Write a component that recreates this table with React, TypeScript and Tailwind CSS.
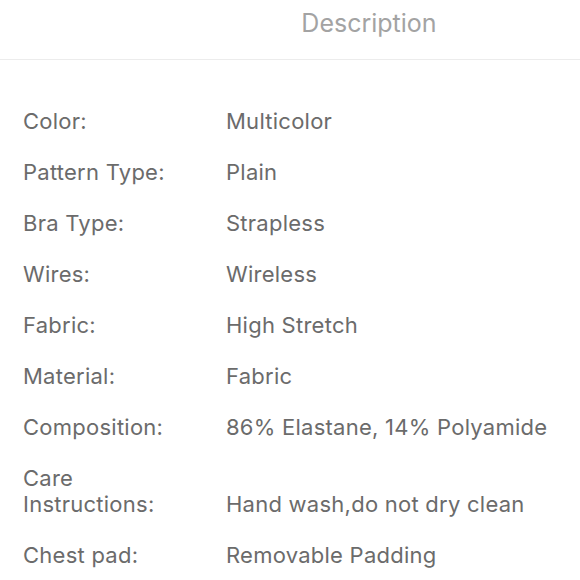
const rows: [string, string][] = [
  ['Color:', 'Multicolor'],
  ['Pattern Type:', 'Plain'],
  ['Bra Type:', 'Strapless'],
  ['Wires:', 'Wireless'],
  ['Fabric:', 'High Stretch'],
  ['Material:', 'Fabric'],
  ['Composition:', '86% Elastane, 14% Polyamide'],
  ['Care Instructions:', 'Hand wash,do not dry clean'],
  ['Chest pad:', 'Removable Padding'],
]

export default function App() {
  return (
    <div className="w-[580px] h-[580px] overflow-hidden bg-white font-['Inter',sans-serif]">
      <div className="h-[60px] border-b border-[#ececec] flex items-start justify-center pl-[158px]">
        <h1 className="mt-[7px] text-[25px] leading-[32px] text-[#a3a3a3]">Description</h1>
      </div>
      <div className="pt-[48px] px-[23px] flex flex-col gap-[25px]">
        {rows.map(([label, value]) => (
          <div key={label} className="flex items-end text-[22px] leading-[26px] tracking-[0.25px] text-[#6b6b6b]">
            <span className="w-[203px] pr-[30px] shrink-0">{label}</span>
            <span>{value}</span>
          </div>
        ))}
      </div>
    </div>
  )
}
